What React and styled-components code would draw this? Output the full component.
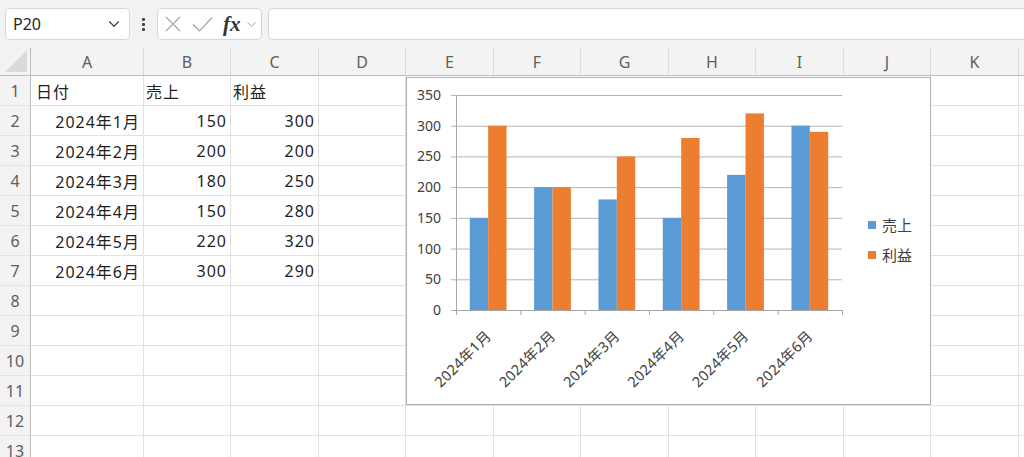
import React from 'react'
import styled, { createGlobalStyle } from 'styled-components'
import { ChevronDown } from 'lucide-react'

const GlobalStyle = createGlobalStyle`
    html, body {
        margin:0;
        padding:0;
        background:#ffffff;
        overflow:hidden;
    }
    body {
        font-family:"Noto Sans CJK JP", "Noto Sans", sans-serif;
    }
`

const cols = ['A','B','C','D','E','F','G','H','I','J','K','']
const rows = [
    ['日付','売上','利益'],
    ['2024年1月',150,300],
    ['2024年2月',200,200],
    ['2024年3月',180,250],
    ['2024年4月',150,280],
    ['2024年5月',220,320],
    ['2024年6月',300,290],
]
const rowCount = 13
const chartFont = '"Noto Sans", "Noto Sans CJK JP", sans-serif'

function Chart() {
    const data = rows.slice(1)
    const PL = 49, PR = 435, PT = 17, PB = 232
    const catW = (PR - PL) / data.length
    const w = catW / 3.5
    const y = v => PB - (v / 350) * (PB - PT)
    const ticks = [0,50,100,150,200,250,300,350]

    return (
        <ChartBox>
            <svg width="523" height="326" viewBox="0 0 523 326">
                {ticks.map(t => (
                    <g key={t}>
                        <line x1={PL - 5} x2={PR} y1={y(t) + 0.5} y2={y(t) + 0.5} stroke={t === 0 ? '#a6a6a6' : '#b4b4b4'} strokeWidth="1" />
                        <text x="34" y={y(t) + 5} textAnchor="end" fontSize="14" fill="#404040" fontFamily={chartFont}>{t}</text>
                    </g>
                ))}
                <line x1={PL + 0.5} x2={PL + 0.5} y1={PT} y2={PB + 5} stroke="#a6a6a6" />
                {data.map((d, i) => {
                    const x0 = PL + i * catW + 0.75 * w
                    return (
                        <g key={d[0]}>
                            <rect x={x0} y={y(d[1])} width={w} height={PB - y(d[1])} fill="#5b9bd5" />
                            <rect x={x0 + w} y={y(d[2])} width={w} height={PB - y(d[2])} fill="#ed7d31" />
                            <line x1={PL + (i + 1) * catW + 0.5} x2={PL + (i + 1) * catW + 0.5} y1={PB} y2={PB + 5} stroke="#a6a6a6" />
                            <text
                                transform={`translate(${PL + i * catW + catW / 2 + 4}, 259) rotate(-45)`}
                                textAnchor="end"
                                fontSize="14.5"
                                letterSpacing="0.3"
                                fill="#404040"
                                fontFamily={chartFont}
                            >{d[0]}</text>
                        </g>
                    )
                })}
                <rect x="461" y="143" width="8" height="8" fill="#5b9bd5" />
                <text x="475" y="152.5" fontSize="15" fill="#404040" fontFamily={chartFont}>売上</text>
                <rect x="461" y="173" width="8" height="8" fill="#ed7d31" />
                <text x="475" y="182.5" fontSize="15" fill="#404040" fontFamily={chartFont}>利益</text>
            </svg>
        </ChartBox>
    )
}

function CancelIcon() {
    return (
        <svg width="16" height="16" viewBox="0 0 16 16">
            <path d="M1 1 L15 15 M15 1 L1 15" stroke="#a3a3a3" strokeWidth="1.2" fill="none" />
        </svg>
    )
}

function EnterIcon() {
    return (
        <svg width="21" height="16" viewBox="0 0 21 16">
            <path d="M1 8.5 L7.5 15 L20 1.5" stroke="#a3a3a3" strokeWidth="1.2" fill="none" />
        </svg>
    )
}

function App() {
    return (
        <Page>
            <GlobalStyle />
            <Toolbar>
                <NameBox>
                    <span>P20</span>
                    <ChevronDown size={18} strokeWidth={1.6} color="#444" />
                </NameBox>
                <Dots><i /><i /><i /></Dots>
                <FxGroup>
                    <CancelIcon />
                    <EnterIcon />
                    <Fx>fx</Fx>
                    <ChevronDown size={15} strokeWidth={1.3} color="#8a8a8a" />
                </FxGroup>
                <FormulaInput />
            </Toolbar>
            <Sheet>
                <Grid>
                    <Corner><CornerTri /></Corner>
                    {cols.map((c, ci) => <ColHead key={ci}>{c}</ColHead>)}
                    {Array.from({ length: rowCount }).map((_, r) => (
                        <React.Fragment key={r}>
                            <RowHead>{r + 1}</RowHead>
                            {cols.map((c, ci) => {
                                const v = rows[r] ? rows[r][ci] : undefined
                                const right = r > 0 && v !== undefined
                                return (
                                    <Cell key={ci} $right={right} $first={ci === 0}>
                                        {v}
                                    </Cell>
                                )
                            })}
                        </React.Fragment>
                    ))}
                </Grid>
                <Chart />
            </Sheet>
        </Page>
    )
}

export default App

const Page = styled.div`
    width:1024px;
    height:457px;
    overflow:hidden;
    background:#fff;
`
const Toolbar = styled.div`
    height:48px;
    background:#f0f2f4;
    display:flex;
    align-items:center;
    padding-left:5px;
    box-sizing:border-box;
`
const NameBox = styled.div`
    width:125px;
    height:32px;
    box-sizing:border-box;
    background:#fff;
    border:1px solid #d6d6d6;
    border-radius:5px;
    display:flex;
    align-items:center;
    justify-content:space-between;
    padding:0 6px 0 7px;
    font-family:"Noto Sans", sans-serif;
    font-size:16px;
    color:#262626;
`
const Dots = styled.div`
    width:27px;
    display:flex;
    flex-direction:column;
    align-items:center;
    gap:2px;
    i {
        width:3px;
        height:3px;
        background:#444;
        border-radius:1px;
    }
`
const FxGroup = styled.div`
    width:105px;
    height:32px;
    box-sizing:border-box;
    background:#fff;
    border:1px solid #d6d6d6;
    border-radius:5px;
    display:flex;
    align-items:center;
    padding:0 2px 0 7px;
    gap:11px;
    svg {
        flex-shrink:0;
    }
`
const Fx = styled.span`
    font-family:"Liberation Serif", serif;
    font-style:italic;
    font-weight:bold;
    font-size:21px;
    color:#333;
    margin-left:-1px;
    margin-right:-8px;
    line-height:1;
`
const FormulaInput = styled.div`
    flex:1;
    height:32px;
    margin-left:6px;
    box-sizing:border-box;
    background:#fff;
    border:1px solid #d6d6d6;
    border-right:none;
    border-radius:5px 0 0 5px;
`
const Sheet = styled.div`
    position:relative;
`
const Grid = styled.div`
    display:grid;
    grid-template-columns:31px 113px 87px 88px 87px 88px 87px 88px 87px 88px 87px 88px 87px;
    grid-template-rows:28px;
    grid-auto-rows:30px;
`
const Corner = styled.div`
    background:#f3f3f3;
    border-right:1px solid #bdbdbd;
    border-bottom:1px solid #bdbdbd;
    position:relative;
    box-sizing:border-box;
`
const CornerTri = styled.div`
    position:absolute;
    right:3px;
    bottom:3px;
    width:0;
    height:0;
    border-left:22px solid transparent;
    border-bottom:22px solid #dadada;
`
const ColHead = styled.div`
    background:#f3f3f3;
    border-right:1px solid #dcdcdc;
    border-bottom:1px solid #bdbdbd;
    box-sizing:border-box;
    display:flex;
    align-items:center;
    justify-content:center;
    font-family:"Noto Sans", sans-serif;
    font-size:16px;
    color:#5e5e5e;
`
const RowHead = styled.div`
    background:#f3f3f3;
    border-right:1px solid #bdbdbd;
    border-bottom:1px solid #e3e3e3;
    box-sizing:border-box;
    display:flex;
    align-items:center;
    justify-content:center;
    font-family:"Noto Sans", sans-serif;
    font-size:16px;
    color:#5e5e5e;
`
const Cell = styled.div`
    border-right:1px solid #e1e1e1;
    border-bottom:1px solid #e1e1e1;
    box-sizing:border-box;
    display:flex;
    align-items:center;
    justify-content:${p => p.$right ? 'flex-end' : 'flex-start'};
    padding:${p => p.$right ? '0 3px 0 0' : (p.$first ? '0 0 0 5px' : '0 0 0 2px')};
    font-family:"Noto Sans", "Noto Sans CJK JP", sans-serif;
    font-size:16px;
    letter-spacing:1px;
    color:#1f1f1f;
    white-space:nowrap;
`
const ChartBox = styled.div`
    position:absolute;
    left:406px;
    top:29px;
    width:525px;
    height:328px;
    box-sizing:border-box;
    background:#fff;
    border:1px solid #b0b0b0;
    svg {
        display:block;
    }
`
